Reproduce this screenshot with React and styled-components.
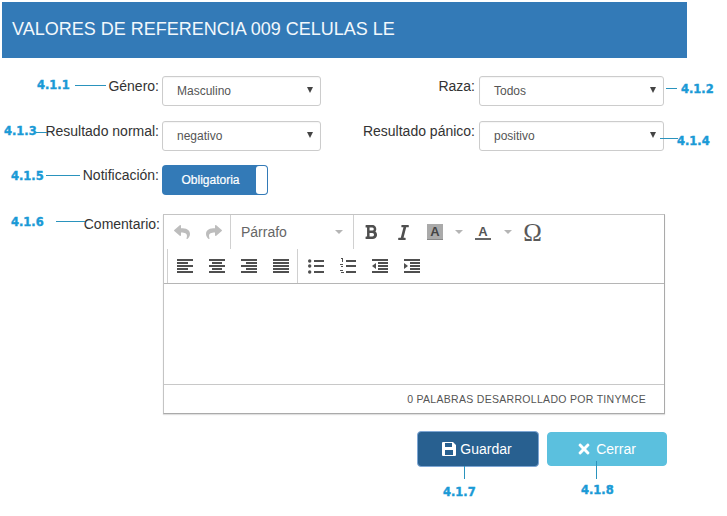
import React from "react";
import styled, { createGlobalStyle } from "styled-components";
import { FaTimes, FaReply, FaShare, FaBold, FaItalic } from "react-icons/fa";

const Global = createGlobalStyle`
  html, body { margin: 0; padding: 0; background: #fff; }
  body { font-family: "Liberation Sans", Arial, sans-serif; color: #333; }
`;

const Page = styled.div`
  position: relative;
  width: 727px;
  height: 516px;
  overflow: hidden;
  padding-top: 2px;
  box-sizing: border-box;
`;
const Header = styled.header`
  display: flex;
  align-items: center;
  box-sizing: border-box;
  width: 685px;
  height: 56px;
  margin-left: 2px;
  padding: 0 0 2px 10px;
  background: #337ab7;
  color: #f2f8fc;
  font-size: 18px;
`;
const Form = styled.div`
  display: flex;
  flex-direction: column;
  margin-top: 18px;
`;
const Row = styled.div`
  display: flex;
  margin-bottom: ${(p) => p.$after ?? 15}px;
`;
const Label = styled.label`
  box-sizing: border-box;
  width: ${(p) => p.$w}px;
  margin-right: ${(p) => p.$gap}px;
  padding-top: 2px;
  text-align: right;
  font-size: 14px;
  line-height: 17px;
  white-space: nowrap;
  color: #333;
`;
const SelectBox = styled.div`
  display: flex;
  align-items: center;
  justify-content: space-between;
  box-sizing: border-box;
  width: ${(p) => p.$w}px;
  height: 30px;
  padding: 0 7px 1px 14px;
  border: 1px solid #ccc;
  border-radius: 3px;
  background: #fff;
  font-size: 12px;
  color: #555;
  box-shadow: inset 0 1px 1px rgba(0, 0, 0, 0.04);
`;
const Arrow = styled.span`
  width: 0;
  height: 0;
  margin-bottom: 2px;
  border-left: 3px solid transparent;
  border-right: 3px solid transparent;
  border-top: 6px solid #444;
`;
const Toggle = styled.div`
  display: flex;
  align-items: stretch;
  box-sizing: border-box;
  width: 106px;
  height: 30px;
  padding: 1px;
  border-radius: 4px;
  background: #337ab7;
`;
const ToggleText = styled.span`
  flex: 1;
  display: flex;
  align-items: center;
  justify-content: center;
  padding-left: 2px;
  color: #fff;
  font-size: 12px;
  -webkit-text-stroke: 0.2px #fff;
`;
const ToggleHandle = styled.span`
  width: 11px;
  background: #fff;
  border-radius: 3px;
`;
const Editor = styled.div`
  display: flex;
  flex-direction: column;
  box-sizing: border-box;
  width: 502px;
  height: 200px;
  margin-left: 1px;
  border: 1px solid #c4c4c4;
  border-right-color: #aaa;
  border-bottom-color: #aaa;
  box-shadow: 0 1px 1px rgba(0, 0, 0, 0.12);
  background: #fff;
`;
const Toolbar = styled.div`
  display: flex;
  flex-direction: column;
  height: 69px;
  box-sizing: border-box;
  border-bottom: 1px solid #b5b5b5;
`;
const ToolRow = styled.div`
  display: flex;
  height: 34px;
  align-items: stretch;
  padding-left: ${(p) => p.$pad || 2}px;
`;
const Group = styled.div`
  display: flex;
  align-items: center;
  ${(p) => (p.$divider ? "border-left: 1px solid #d0d0d0;" : "")}
  padding-left: ${(p) => p.$pad || 0}px;
`;
const Tool = styled.span`
  display: flex;
  align-items: center;
  justify-content: center;
  width: ${(p) => p.$w || 32}px;
  height: 34px;
  color: ${(p) => (p.$muted ? "#bdbdbd" : "#4f4f4f")};
  font-size: 16px;
`;
const Listbox = styled.div`
  display: flex;
  align-items: center;
  justify-content: space-between;
  box-sizing: border-box;
  width: 122px;
  padding: 0 10px;
  font-size: 14px;
  color: #666;
`;
const Caret = styled.span`
  width: 0;
  height: 0;
  border-left: 4px solid transparent;
  border-right: 4px solid transparent;
  border-top: 4px solid #b5b5b5;
`;
const HiliteA = styled.span`
  display: flex;
  align-items: center;
  justify-content: center;
  width: 16px;
  height: 16px;
  background: #aaa;
  color: #444;
  font-size: 13px;
  font-weight: bold;
  border-bottom: 1px solid #888;
  box-sizing: border-box;
`;
const UnderA = styled.span`
  display: flex;
  align-items: center;
  justify-content: center;
  width: 16px;
  height: 16px;
  color: #555;
  font-size: 13px;
  font-weight: bold;
  border-bottom: 2px solid #666;
  box-sizing: border-box;
`;
const Omega = styled.span`
  margin-left: 1px;
  font-family: "Liberation Serif", "DejaVu Serif", serif;
  font-size: 25px;
  line-height: 1;
  color: #595959;
`;
const Body = styled.div`
  flex: 1;
`;
const Status = styled.div`
  display: flex;
  align-items: center;
  justify-content: flex-end;
  box-sizing: border-box;
  height: 29px;
  padding-right: 18px;
  border-top: 1px solid #c8c8c8;
  font-size: 10.5px;
  letter-spacing: 0.3px;
  text-transform: uppercase;
  color: #555;
`;
const Actions = styled.div`
  display: flex;
  align-items: center;
  gap: 8px;
  margin: 17px 0 0 417px;
`;
const Button = styled.button`
  display: flex;
  align-items: center;
  justify-content: center;
  gap: 4px;
  box-sizing: border-box;
  width: ${(p) => p.$w}px;
  height: ${(p) => p.$h}px;
  padding: 0 ${(p) => p.$padR || 0}px 0 0;
  border: 1px solid ${(p) => p.$border};
  border-radius: 4px;
  background: ${(p) => p.$bg};
  color: #fff;
  font-family: inherit;
  font-size: 14px;
`;
const Mark = styled.span`
  position: absolute;
  left: ${(p) => p.$x}px;
  top: ${(p) => p.$y}px;
  font-family: "DejaVu Sans", sans-serif;
  font-weight: bold;
  font-size: 11.5px;
  line-height: 14px;
  color: #1a9ad6;
  -webkit-text-stroke: 0.4px #1a9ad6;
`;
const Lead = styled.span`
  position: absolute;
  left: ${(p) => p.$x}px;
  top: ${(p) => p.$y}px;
  width: ${(p) => p.$w}px;
  height: ${(p) => p.$h}px;
  background: #2a93bd;
`;

const Bars = ({ rows, dots = [] }) => (
  <svg width="16" height="16" viewBox="0 0 16 16" fill="currentColor">
    {rows.map(([x, y, w, h = 2], i) => (
      <rect key={i} x={x} y={y} width={w} height={h} />
    ))}
    {dots.map((y) => (
      <circle key={y} cx="1.7" cy={y} r="1.7" />
    ))}
  </svg>
);
const alignLeft = [[0, 1, 16], [0, 4, 11], [0, 7, 16], [0, 10, 11], [0, 13, 16]];
const alignCenter = [[0, 1, 16], [3, 4, 10], [0, 7, 16], [3, 10, 10], [0, 13, 16]];
const alignRight = [[0, 1, 16], [5, 4, 11], [0, 7, 16], [5, 10, 11], [0, 13, 16]];
const justify = [[0, 1, 16], [0, 4, 16], [0, 7, 16], [0, 10, 16], [0, 13, 16]];
const bullets = [[6, 2, 10], [6, 7, 10], [6, 13, 10]];
const numbers = [[1, 0, 2, 1], [2, 1, 1, 3], [0, 6, 3, 1], [1, 8, 2, 1], [0, 12, 3, 1], [1, 14, 3, 1], [6, 2, 10], [6, 7, 10], [6, 13, 10]];
const outdent = [[0, 1, 16], [6, 4, 10], [6, 7, 10], [6, 10, 10], [0, 13, 16]];
const Indent = ({ flip }) => (
  <svg width="16" height="16" viewBox="0 0 16 16" fill="currentColor">
    {outdent.map(([x, y, w, h = 2], i) => (
      <rect key={i} x={x} y={y} width={w} height={h} />
    ))}
    <path d={flip ? "M4 5v6L0 8z" : "M0 5v6l4-3z"} />
  </svg>
);
const Floppy = () => (
  <svg width="14" height="14" viewBox="0 0 14 14" fill="currentColor">
    <path d="M1 0h10l3 3v10a1 1 0 0 1-1 1H1a1 1 0 0 1-1-1V1a1 1 0 0 1 1-1zM3 1v4h7V1zM3 8v5h8V8z" fillRule="evenodd" />
  </svg>
);

const marks = [
  ["4.1.1", 37, 78], ["4.1.2", 681, 82], ["4.1.3", 4, 124], ["4.1.4", 677, 134],
  ["4.1.5", 11, 169], ["4.1.6", 11, 215], ["4.1.7", 443, 485], ["4.1.8", 581, 483],
];
const leads = [
  [75, 85, 31, 1], [666, 88, 11, 1], [36, 132, 11, 1], [660, 138, 18, 1],
  [46, 175, 34, 1], [56, 221, 29, 1], [464, 466, 1, 13], [596, 461, 1, 18],
];

export default function App() {
  return (
    <Page>
      <Global />
      <Header>VALORES DE REFERENCIA 009 CELULAS LE</Header>
      <Form>
        <Row>
          <Label $w={159} $gap={3}>Género:</Label>
          <SelectBox $w={159}>Masculino<Arrow /></SelectBox>
          <Label $w={154} $gap={4}>Raza:</Label>
          <SelectBox $w={185}>Todos<Arrow /></SelectBox>
        </Row>
        <Row $after={14}>
          <Label $w={159} $gap={3}>Resultado normal:</Label>
          <SelectBox $w={159}>negativo<Arrow /></SelectBox>
          <Label $w={154} $gap={4}>Resultado pánico:</Label>
          <SelectBox $w={185}>positivo<Arrow /></SelectBox>
        </Row>
        <Row $after={19}>
          <Label $w={159} $gap={3}>Notificación:</Label>
          <Toggle><ToggleText>Obligatoria</ToggleText><ToggleHandle /></Toggle>
        </Row>
        <Row $after={0}>
          <Label $w={160} $gap={2}>Comentario:</Label>
          <Editor>
            <Toolbar>
              <ToolRow>
                <Group>
                  <Tool $muted><FaReply size={16} /></Tool>
                  <Tool $muted><FaShare size={16} /></Tool>
                </Group>
                <Group $divider>
                  <Listbox>Párrafo<Caret /></Listbox>
                </Group>
                <Group $divider $pad={1}>
                  <Tool><FaBold size={16} /></Tool>
                  <Tool><FaItalic size={17} /></Tool>
                  <Tool><HiliteA>A</HiliteA></Tool>
                  <Tool $w={16}><Caret /></Tool>
                  <Tool><UnderA>A</UnderA></Tool>
                  <Tool $w={17}><Caret /></Tool>
                  <Tool><Omega>Ω</Omega></Tool>
                </Group>
              </ToolRow>
              <ToolRow $pad={3}>
                <Group $divider $pad={1}>
                  <Tool><Bars rows={alignLeft} /></Tool>
                  <Tool><Bars rows={alignCenter} /></Tool>
                  <Tool><Bars rows={alignRight} /></Tool>
                  <Tool><Bars rows={justify} /></Tool>
                </Group>
                <Group $divider $pad={2}>
                  <Tool><Bars rows={bullets} dots={[3, 8, 14]} /></Tool>
                  <Tool><Bars rows={numbers} /></Tool>
                  <Tool><Indent flip /></Tool>
                  <Tool><Indent /></Tool>
                </Group>
              </ToolRow>
            </Toolbar>
            <Body />
            <Status>0 palabras desarrollado por tinymce</Status>
          </Editor>
        </Row>
        <Actions>
          <Button $w={122} $h={36} $padR={2} $bg="#286090" $border="#7ea6d4"><Floppy />Guardar</Button>
          <Button $w={120} $h={34} $padR={2} $bg="#5bc0de" $border="#5bc0de"><FaTimes size={16} />Cerrar</Button>
        </Actions>
      </Form>
      {marks.map(([t, x, y]) => <Mark key={t} $x={x} $y={y}>{t}</Mark>)}
      {leads.map(([x, y, w, h], i) => <Lead key={i} $x={x} $y={y} $w={w} $h={h} />)}
    </Page>
  );
}
